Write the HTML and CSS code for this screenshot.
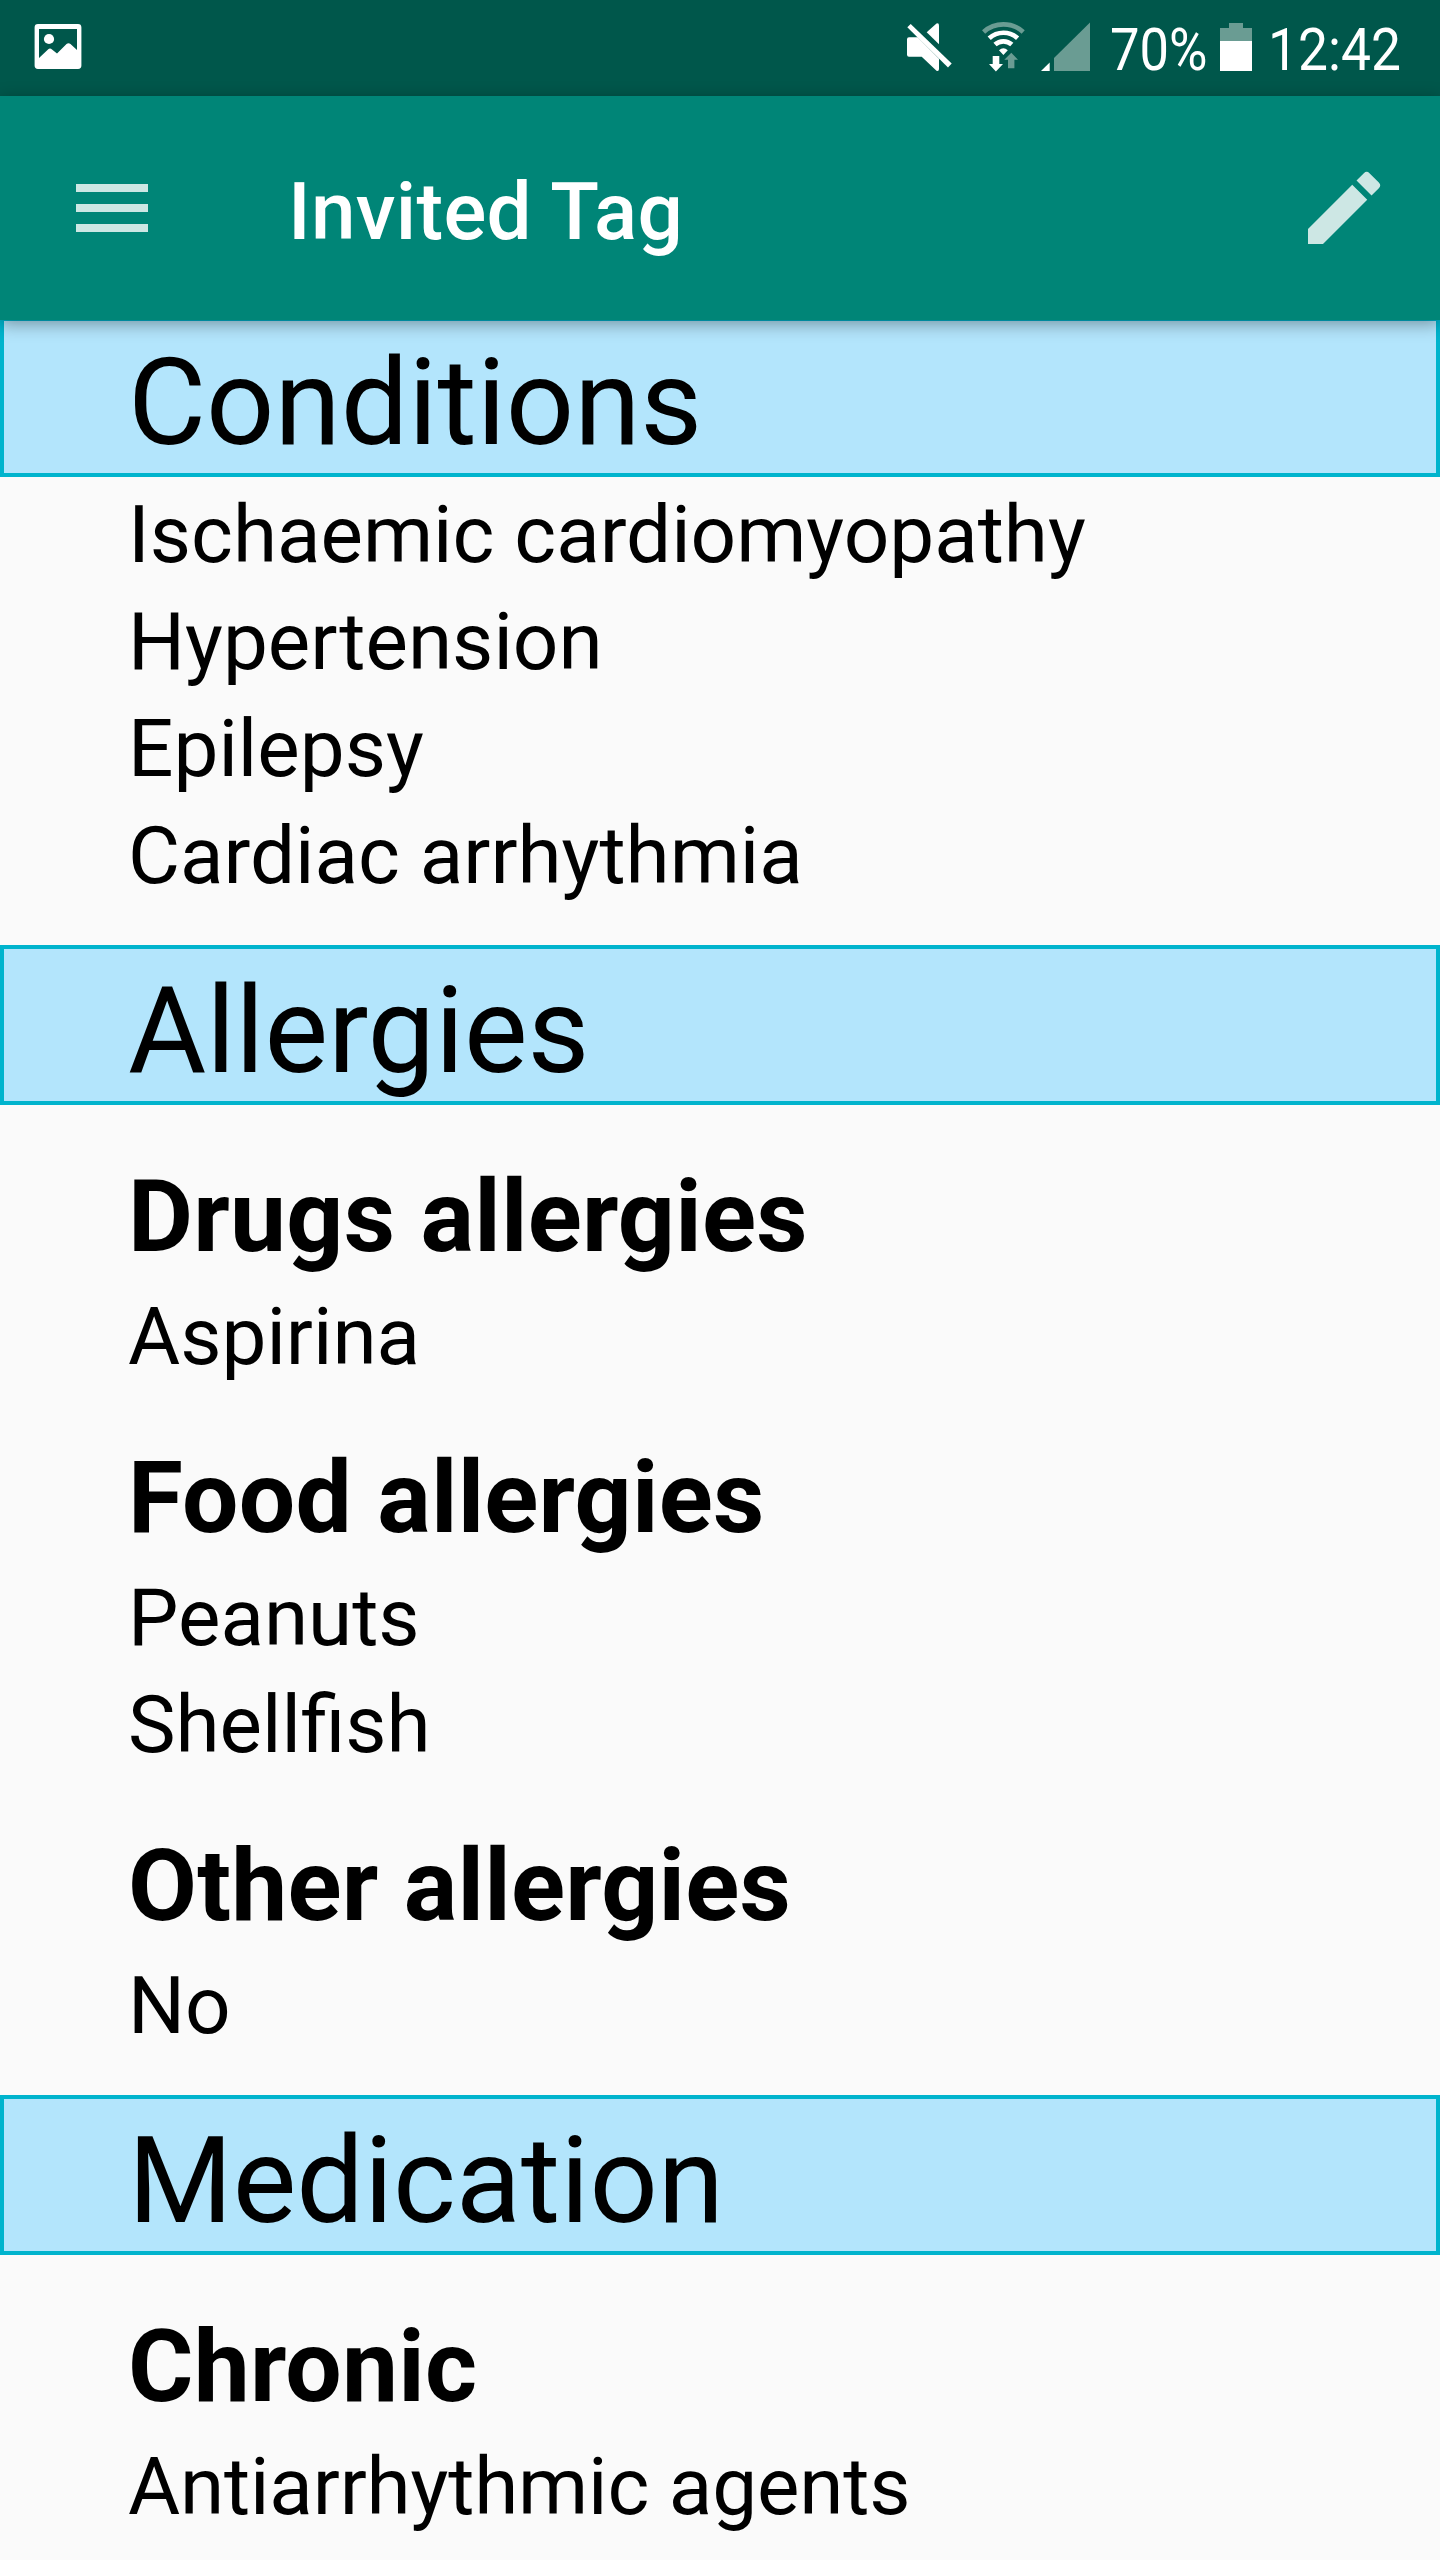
FILE: index.html
```html
<!DOCTYPE html>
<html lang="en">
<head>
<meta charset="utf-8">
<title>Invited Tag</title>
<link rel="stylesheet" href="styles.css">
</head>
<body>
<div class="status">
  <svg width="48" height="96" viewBox="34 0 48 96">
    <path fill="#fff" fill-rule="evenodd" d="M38 24h40a3.4 3.4 0 0 1 3.4 3.4v38.2A3.4 3.4 0 0 1 78 69H38a3.4 3.4 0 0 1-3.4-3.4V27.4A3.4 3.4 0 0 1 38 24zM39 29v29l9-8.6q2-1.6 4 0l5 4.2 9.5-9.6q2-1.6 4 0L77 50V29z"/>
    <circle cx="49" cy="39" r="5.1" fill="#fff"/>
  </svg>
  <div class="s-right">
    <svg width="196" height="96" viewBox="10 0 196 96">
      <g fill="#fff">
        <path d="M20.700 24 61.700 63.500 58 67.600 17.300 27.300z"/>
        <path d="M36.700 32.300 46.500 23.500Q49 22.800 49 25.500V44.300z"/>
        <path d="M19 37.300h8.700L49 58.800V69q0 2.600-2.500 1.800L31.700 56.700H19q-2 0-2-2V39.300q0-2 2-2z"/>
      </g>
      <g fill="none" stroke-width="4.7">
        <path stroke="#6a9c93" d="M93.600 31.900a29.700 29.700 0 0 1 39.600 0"/>
        <path stroke="#fff" d="M99.200 38.200a21.200 21.200 0 0 1 28.400 0"/>
        <path stroke="#fff" d="M105 44.600a12.600 12.600 0 0 1 16.800 0"/>
      </g>
      <path fill="#fff" d="M113.400 55l-4.400-4.700q4.400-4.200 8.800 0zM102.700 56h6.600v8h3.700l-7.100 7.600L99 64h3.700z"/>
      <path fill="#6a9c93" d="M118 68.200h6.400v-8.400h3.600l-6.700-7-7 7h3.700z"/>
      <path fill="#fff" d="M151 71h8.700v-8.500z"/>
      <path fill="#6a9c93" d="M164 71h36V22.500L164 58z"/>
    </svg>
    <span class="s-text s-pct">70%</span>
    <svg width="32" height="96" viewBox="0 0 32 96"><path fill="#6a9c93" d="M0 28h9v-5h14v5h9v13H0z"/><path fill="#fff" d="M0 41h32v30H0z"/></svg>
    <span class="s-text s-time">12:42</span>
  </div>
</div>
<header class="bar">
  <svg width="72" height="48" viewBox="0 0 72 48"><path fill="#cde7e4" d="M0 0h72v8H0zM0 20h72v8H0zM0 40h72v8H0z"/></svg>
  <h1>Invited Tag</h1>
  <svg width="96" height="96" viewBox="0 0 24 24"><path fill="#cde7e4" d="M3 17.250V21h3.750L17.810 9.940l-3.750-3.750L3 17.250zM20.710 7.040a1 1 0 0 0 0-1.410l-2.340-2.340a1 1 0 0 0-1.410 0l-1.830 1.830 3.750 3.750 1.830-1.830z"/></svg>
</header>
<main>
  <h2>Conditions</h2>
  <ul class="direct"><li>Ischaemic cardiomyopathy</li><li>Hypertension</li><li>Epilepsy</li><li>Cardiac arrhythmia</li></ul>
  <h2>Allergies</h2>
  <h3>Drugs allergies</h3>
  <ul><li>Aspirina</li></ul>
  <h3>Food allergies</h3>
  <ul><li>Peanuts</li><li>Shellfish</li></ul>
  <h3>Other allergies</h3>
  <ul><li>No</li></ul>
  <h2>Medication</h2>
  <h3>Chronic</h3>
  <ul><li class="long">Antiarrhythmic agents</li></ul>
</main>
</body>
</html>
```
FILE: styles.css
```css
* { box-sizing: border-box; margin: 0; padding: 0; }
body { font-family: Roboto, sans-serif; background: #fafafa; color: #000; width: 1440px; height: 2560px; overflow: hidden; }
svg { display: block; flex: none; }
.status { height: 96px; background: #00574b; display: flex; justify-content: space-between; padding: 0 38px 0 34px; color: #fff; }
.s-right { display: flex; align-items: flex-start; }
.s-text { font-size: 60px; line-height: 99px; white-space: nowrap; transform: scaleX(.875); transform-origin: left; }
.s-pct { width: 110px; margin-left: 14px; }
.s-time { width: 134px; margin-left: 16px; transform: scaleX(.89); }
.bar { position: relative; z-index: 1; height: 224px; background: #008577; display: flex; align-items: center; padding: 0 48px 0 76px; box-shadow: 0 4px 16px rgba(0, 0, 0, .36); }
.bar h1 { flex: 1; margin-left: 140px; padding-top: 7px; font-size: 80px; font-weight: 500; letter-spacing: .3px; color: #fff; }
main { margin-top: -3px; }
h2 { height: 160px; border: 4px solid #00b4cd; background: #b3e5fc; font-weight: 400; font-size: 120px; line-height: 164px; padding-left: 124px; letter-spacing: -.05px; }
h3 { font-size: 100px; font-weight: 700; line-height: 133px; padding: 0 128px; margin-top: 5px; letter-spacing: .25px; }
h2 + h3 { margin-top: 45px; }
ul { list-style: none; padding: 1px 128px 35px; }
.direct { padding-top: 5px; }
li { font-size: 80px; line-height: 107px; }
.long { letter-spacing: -.16px; }
```
